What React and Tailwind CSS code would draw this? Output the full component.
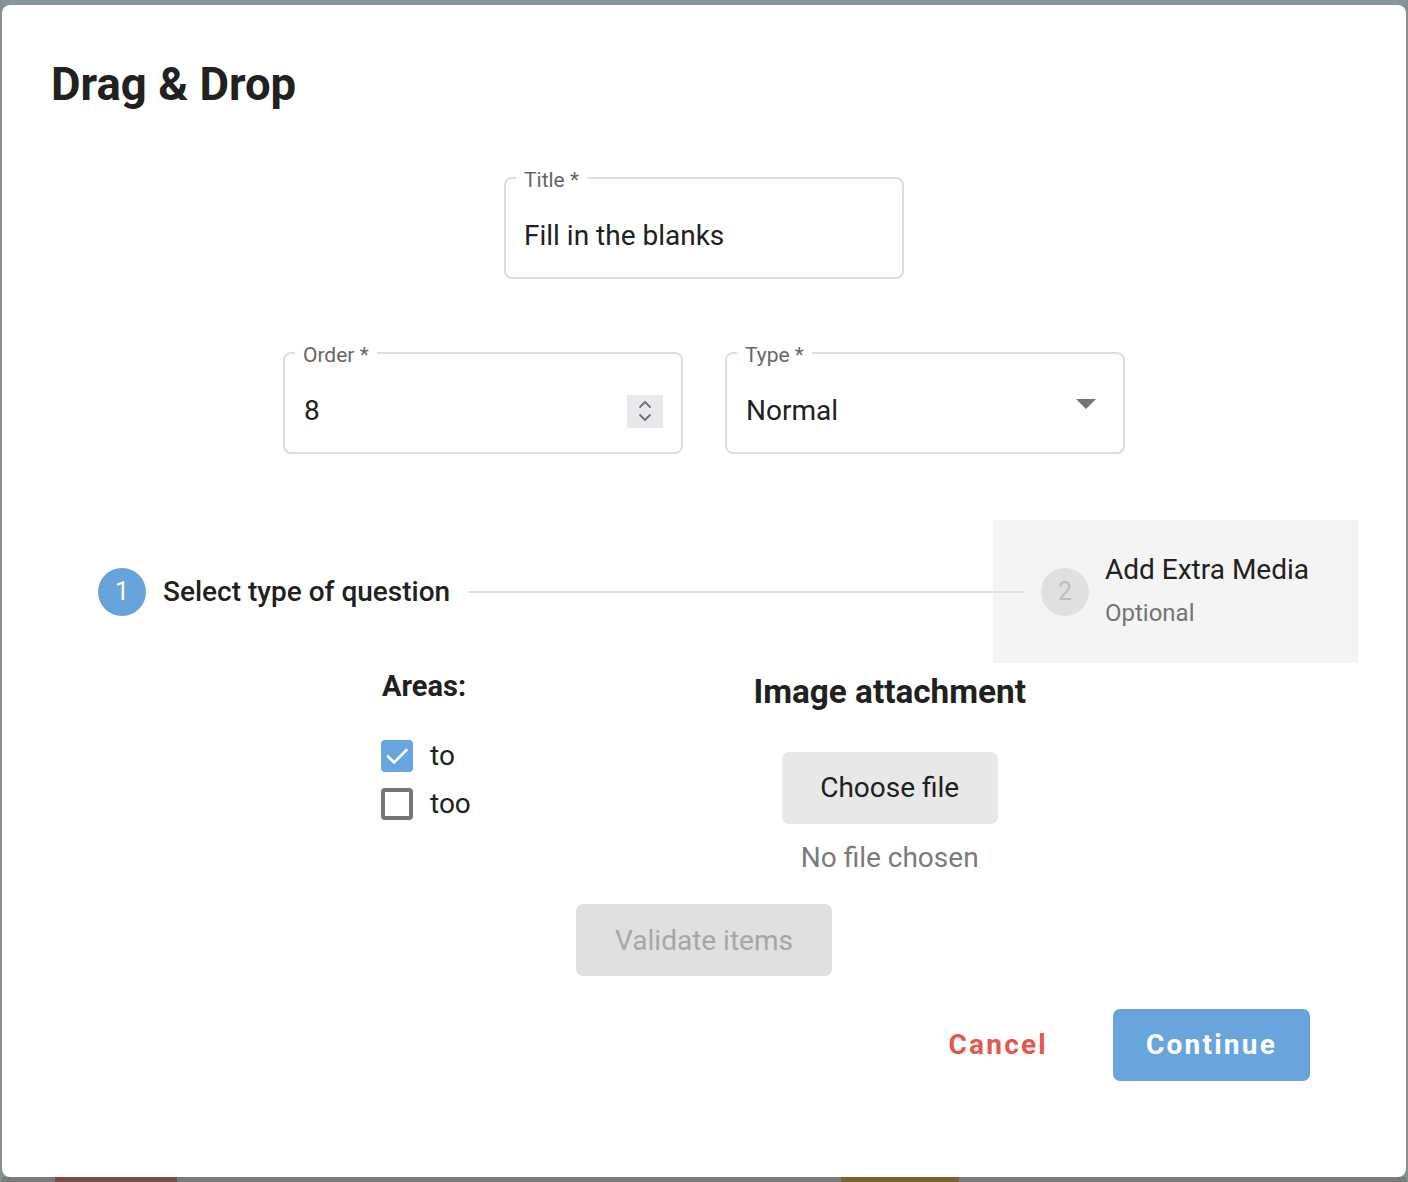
import React from 'react';

const Field = ({ label, children, className = '' }) => (
  <div className={`relative h-[102px] w-[400px] rounded-[8px] border-2 border-[#dedede] bg-white ${className}`}>
    <span className="absolute -top-[11px] left-[10px] bg-white px-[8px] text-[21px] leading-[24px] text-[#666666]">
      {label}
    </span>
    {children}
  </div>
);

const Checkbox = ({ checked, label }) => (
  <label className="flex h-[48px] items-center">
    {checked ? (
      <span className="-ml-[1px] flex h-[32px] w-[32px] items-center justify-center rounded-[4px] bg-[#67a6de]">
        <svg width="26" height="26" viewBox="0 0 26 26" fill="none">
          <path d="M4 13.5l6 6L22.5 7" stroke="white" strokeWidth="2.6" strokeLinecap="round" strokeLinejoin="round" />
        </svg>
      </span>
    ) : (
      <span className="-ml-[1px] h-[32px] w-[32px] rounded-[4px] border-4 border-[#757575]" />
    )}
    <span className="ml-[17px] text-[28px] leading-[36px] text-[#212121]">{label}</span>
  </label>
);

export default function App() {
  return (
    <div className="flex h-[1182px] w-full flex-col bg-[#848f93] px-[2px] font-[Roboto,'Liberation_Sans',sans-serif]">
      <div className="h-[5px] bg-[#86979c]" />

      {/* Dialog */}
      <div className="flex h-[1172px] flex-col rounded-[8px] bg-white">
        <h1 className="pl-[49px] pt-[54px] text-[45.5px] font-bold leading-[52px] text-[#212121]">Drag &amp; Drop</h1>

        <Field label="Title *" className="mx-auto mt-[66px]">
          <div className="pl-[18px] pt-[39px] text-[28px] leading-[36px] text-[#212121]">Fill in the blanks</div>
        </Field>

        <div className="mt-[73px] flex justify-center gap-[42px]">
          <Field label="Order *">
            <div className="flex items-center pl-[19px] pr-[18px] pt-[39px]">
              <span className="flex-1 text-[28px] leading-[36px] text-[#212121]">8</span>
              <span className="flex h-[33px] w-[36px] flex-col items-center justify-center bg-[#e9e9ed]">
                <svg width="16" height="24" viewBox="0 0 16 24" fill="none">
                  <path d="M3 8l5-5 5 5" stroke="#6f6f75" strokeWidth="1.8" strokeLinecap="round" strokeLinejoin="round" />
                  <path d="M3 16l5 5 5-5" stroke="#6f6f75" strokeWidth="1.8" strokeLinecap="round" strokeLinejoin="round" />
                </svg>
              </span>
            </div>
          </Field>
          <Field label="Type *">
            <div className="flex items-center pl-[19px] pr-[26px] pt-[39px]">
              <span className="flex-1 text-[28px] leading-[36px] text-[#212121]">Normal</span>
              <svg width="22" height="12" viewBox="0 0 22 12" className="-mt-[14px]">
                <polygon points="1,1 21,1 11,11" fill="#757575" />
              </svg>
            </div>
          </Field>
        </div>

        {/* Stepper */}
        <div className="mt-[66px] flex h-[143px] items-center px-[48px]">
          <div className="flex items-center pl-[48px]">
            <span className="flex h-[48px] w-[48px] items-center justify-center rounded-full bg-[#66a3db] text-[25px] text-white">1</span>
            <span className="ml-[17px] text-[28px] font-medium leading-[36px] text-[#212121]">Select type of question</span>
          </div>
          <div className="relative z-10 -mr-[32px] ml-[18px] h-[2px] flex-1 bg-[#e0e0e0]" />
          <div className="flex h-full items-center bg-[#f4f4f4] pl-[48px] pr-[49px]">
            <span className="flex h-[48px] w-[48px] items-center justify-center rounded-full bg-[#e0e0e0] text-[25px] text-[#bdbdbd]">2</span>
            <div className="ml-[16px] -mt-[2px] flex flex-col">
              <span className="text-[28px] leading-[34px] text-[#212121]">Add Extra Media</span>
              <span className="mt-[11px] text-[24px] leading-[30px] text-[#757575]">Optional</span>
            </div>
          </div>
        </div>

        {/* Areas + image attachment */}
        <div className="mx-auto mt-[5px] flex w-[644px] justify-between">
          <div className="flex flex-col">
            <span className="text-[29px] font-bold leading-[36px] text-[#212121]">Areas:</span>
            <div className="mt-[28px] flex flex-col">
              <Checkbox checked label="to" />
              <Checkbox label="too" />
            </div>
          </div>
          <div className="mt-[3px] flex flex-col items-center">
            <span className="text-[33.3px] font-bold leading-[42px] text-[#212121]">Image attachment</span>
            <button className="mt-[39px] h-[72px] w-[216px] rounded-[7px] bg-[#e8e8e8] text-[28px] text-[#212121]">Choose file</button>
            <span className="mt-[16px] text-[28px] leading-[36px] text-[#7a7a7a]">No file chosen</span>
          </div>
        </div>

        <button className="mx-auto mt-[28px] h-[72px] w-[256px] rounded-[7px] bg-[#e0e0e0] pt-[2px] text-[28px] text-[#a6a6a6]">Validate items</button>

        {/* Actions */}
        <div className="mt-[33px] flex items-center justify-end pr-[96px]">
          <button className="mr-[65px] text-[28px] font-bold tracking-[0.08em] text-[#e5574f]">Cancel</button>
          <button className="h-[72px] w-[197px] rounded-[7px] bg-[#68a5dc] text-[28px] font-bold tracking-[0.08em] text-white">Continue</button>
        </div>
      </div>

      <div className="flex h-[5px] bg-[#7b7b7b]">
        <span className="ml-[53px] w-[122px] bg-[#7d4a4a]" />
        <span className="ml-[664px] w-[118px] bg-[#7a6230]" />
      </div>
    </div>
  );
}
